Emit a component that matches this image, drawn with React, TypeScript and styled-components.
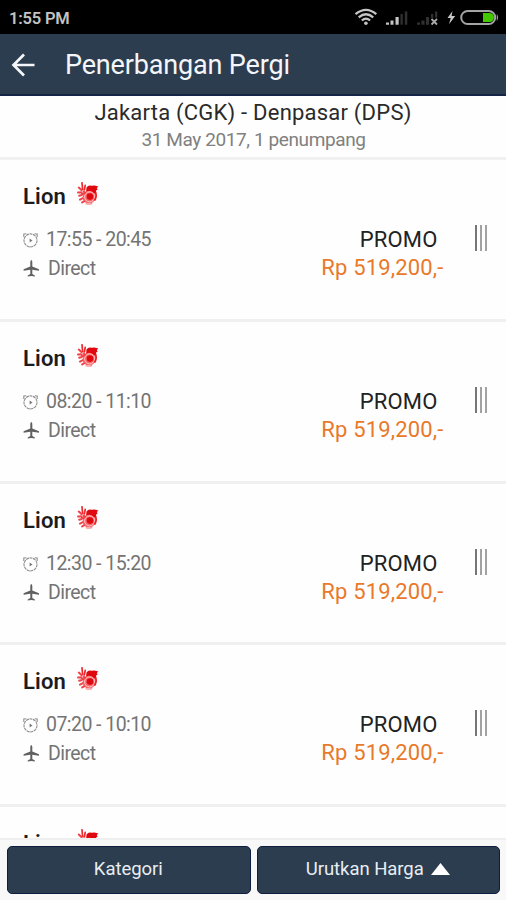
import React from "react";
import styled, { createGlobalStyle } from "styled-components";

const GlobalStyle = createGlobalStyle`
  * { box-sizing: border-box; }
  html, body { margin: 0; padding: 0; background: #fff; overflow: hidden; }
  body { font-family: Roboto, "Liberation Sans", sans-serif; }
`;

const Screen = styled.div`
  display: flex;
  flex-direction: column;
  width: 506px;
  height: 900px;
  overflow: hidden;
  background: #fefefe;
  white-space: nowrap;
`;

const StatusBar = styled.div`
  display: flex;
  flex: none;
  justify-content: space-between;
  height: 34px;
  padding-left: 9px;
  background: #000;
`;

const Clock = styled.span`
  font-size: 16.5px;
  line-height: 37px;
  font-weight: 600;
  color: #c4c4c4;
  letter-spacing: -0.2px;
`;

const Toolbar = styled.header`
  display: flex;
  flex: none;
  align-items: center;
  height: 62px;
  padding-left: 11px;
  background: #2c3d50;
  border-bottom: 2px solid #142548;
`;

const Title = styled.h1`
  margin: 2px 0 0 29px;
  font-size: 27px;
  line-height: 60px;
  font-weight: 400;
  color: #f4f6f9;
  letter-spacing: -0.16px;
`;

const RouteSummary = styled.section`
  flex: none;
  height: 64px;
  padding-top: 3px;
  border-bottom: 3px solid #f1f1f1;
  text-align: center;
`;

const Route = styled.div`
  font-size: 22px;
  line-height: 28px;
  color: #2a2a2a;
  letter-spacing: 0.22px;
`;

const TripInfo = styled.div`
  padding-left: 1px;
  font-size: 19px;
  line-height: 26px;
  color: #808080;
  letter-spacing: -0.4px;
`;

const FlightList = styled.main`
  flex: none;
  height: 678px;
  overflow: hidden;
`;

const FlightCard = styled.article`
  display: flex;
  justify-content: space-between;
  height: 161.75px;
  padding: 22px 19.5px 0 23px;
  border-bottom: 3px solid #f0f0f0;
`;

const Airline = styled.div`
  display: flex;
  height: 30px;
  gap: 11px;
`;

const AirlineName = styled.span`
  font-size: 22px;
  line-height: 30px;
  font-weight: 600;
  color: #1c1c1c;
  letter-spacing: 0.15px;
`;

const Details = styled.div`
  display: flex;
  flex-direction: column;
`;

const DetailRow = styled.div<{ $gap: number; $top: number }>`
  display: flex;
  align-items: center;
  gap: ${(p) => p.$gap}px;
  height: 28px;
  margin-top: ${(p) => p.$top}px;
`;

const DetailText = styled.span`
  font-size: 19.5px;
  line-height: 28px;
  color: #747474;
  letter-spacing: -0.55px;
`;

const Fare = styled.div`
  display: flex;
  gap: 31px;
  padding-top: 43px;
`;

const FareText = styled.div`
  display: flex;
  flex-direction: column;
  align-items: flex-end;
  padding-top: 1px;
`;

const Promo = styled.span`
  margin-right: 6px;
  font-size: 22px;
  line-height: 28px;
  color: #222;
  letter-spacing: 0.15px;
`;

const Price = styled.span`
  font-size: 22px;
  line-height: 28px;
  color: #e8792a;
  letter-spacing: 0.16px;
`;

const Handle = styled.div`
  display: flex;
  gap: 3px;
  height: 26px;
`;

const HandleBar = styled.i<{ $tone: string }>`
  width: 2px;
  background: ${(p) => p.$tone};
`;

const BottomBar = styled.footer`
  display: flex;
  flex: none;
  gap: 6px;
  height: 62px;
  padding: 6px 6px 6px 7px;
  background: #f8f8f8;
  border-top: 2px solid #efefef;
`;

const ActionButton = styled.button`
  display: flex;
  flex: 1;
  justify-content: center;
  align-items: center;
  gap: 7px;
  height: 48px;
  padding: 0 1px 2px 0;
  border: 1.5px solid #0e1d40;
  border-radius: 5px;
  background: #2c3d50;
  color: #e9edf2;
  font-family: inherit;
  font-size: 18.5px;
  line-height: 26px;
  letter-spacing: -0.05px;
`;

const StatusIcons = () => (
  <svg width="156" height="34" viewBox="0 0 156 34" fill="none">
    <g stroke="#c4c4c4" strokeWidth="2.3">
      <path d="M5.5 14.2Q16 5.6 26.3 14.2" />
      <path d="M8.7 17.4Q16 11.2 23.2 17.4" />
      <path d="M11.8 20.5Q16 16.8 20.1 20.5" />
    </g>
    <circle cx="15.9" cy="23.2" r="1.8" fill="#c4c4c4" />
    <path d="M36 22.5h3v2.3h-3zM40.5 20.5h3v4.3h-3zM45.5 17h3.2v7.8h-3.2z" fill="#c4c4c4" />
    <path d="M50.5 14h2.3v10.8h-2.3zM54.8 11.5h2.5v13.3h-2.5z" fill="#303030" />
    <path d="M67 22.5h3v2.3h-3zM71.5 20.5h3v4.3h-3zM76 17h3v7.8h-3zM81 14h2.3v4h-2.3zM85 11.5h2.3v6H85z" fill="#303030" />
    <path d="M81.5 19l5.5 5.5M87 19l-5.5 5.5" stroke="#aaa" strokeWidth="1.8" />
    <path d="M102.5 11l-5 7h3.2l-1.7 6.2 6.2-8.2h-3.6z" fill="#c8c8c8" />
    <rect x="111.2" y="11" width="34" height="13" rx="6.5" stroke="#a4a4a4" strokeWidth="2" />
    <path d="M146.8 14v7q2.6-3.5 0-7" fill="#a4a4a4" />
    <path d="M133 13h6.5a4.5 4.5 0 0 1 0 9H133z" fill="#43c800" />
  </svg>
);

const BackArrow = () => (
  <svg width="25" height="26" viewBox="0 0 25 26" fill="none" stroke="#f4f6f9" strokeWidth="2.7">
    <path d="M23.5 14H2.5M13 3.5L2.5 14 13 24.5" />
  </svg>
);

const LionLogo = () => (
  <svg width="22" height="24" viewBox="0 0 22 24">
    <path d="M9.5 5.4q2-2.6 5-1.6l3-.3 3.9.9-1.6 1.7.8 1.4-1.6 1.2.4 2.6-2 .4-8.4-1.2z" fill="#e0080f" />
    <circle cx="12" cy="15.2" r="6.4" fill="#f5686b" />
    <circle cx="12.6" cy="14.9" r="5" fill="none" stroke="#ffc4c4" strokeWidth="1" />
    <circle cx="13" cy="14.6" r="3.3" fill="#e0080f" />
    <path d="M18.6 10.6q1.4 4.6-1.2 8" fill="none" stroke="#ea2026" strokeWidth="1.8" />
    <path d="M5 .8l.6 6.8M8.2 3.4l-.8 4.4" stroke="#ee2a30" strokeWidth="1.7" strokeLinecap="round" />
    <path d="M1.8 5.6L4.4 8M1 10.4l3.2-.2M2.2 13.8l2.6-.8M6.6 9.6l1.6 1M5 11.4l1.6.6M3 17.6l2.4-1.2M5.2 20.4l1.8-1" stroke="#f04348" strokeWidth="2" strokeLinecap="round" />
    <path d="M8.6 21.6q3.6 1.4 6.6-.2" fill="none" stroke="#f79a9c" strokeWidth="1.2" />
  </svg>
);

const ClockIcon = () => (
  <svg width="15" height="16" viewBox="0 0 15 16" fill="none" stroke="#8f8f8f">
    <circle cx="7.5" cy="8.4" r="6.5" strokeWidth="1.1" strokeDasharray="3 .6" />
    <path d="M.8 5V2l2.5-.2M11.7 1.8l2.5.2v3" strokeWidth="1.1" />
    <path d="M6.6 6.4v4l2.9-2z" fill="#777" stroke="none" />
  </svg>
);

const PlaneIcon = () => (
  <svg width="17" height="18" viewBox="0 0 17 18" fill="#606060">
    <path d="M8.3 0q-1 .3-1 2v4.5L.6 9.3v1.4l6.7-.9v4.3l-2.6 1.4v1l3.6-.5 3.6.5v-1l-2.6-1.4V9.8l6.7.9V9.3L9.3 6.5V2q0-1.7-1-2z" />
  </svg>
);

const UpTriangle = () => (
  <svg width="19" height="12" viewBox="0 0 19 12" fill="#fff">
    <path d="M9.5 0L19 12H0z" />
  </svg>
);

const departures = ["17:55 - 20:45", "08:20 - 11:10", "12:30 - 15:20", "07:20 - 10:10"];

const Flight = ({ time }: { time?: string }) => (
  <FlightCard>
    <Details>
      <Airline>
        <AirlineName>Lion</AirlineName>
        <LionLogo />
      </Airline>
      {time && (
        <>
          <DetailRow $gap={8} $top={14}>
            <ClockIcon />
            <DetailText>{time}</DetailText>
          </DetailRow>
          <DetailRow $gap={8} $top={1}>
            <PlaneIcon />
            <DetailText>Direct</DetailText>
          </DetailRow>
        </>
      )}
    </Details>
    {time && (
      <Fare>
        <FareText>
          <Promo>PROMO</Promo>
          <Price>Rp 519,200,-</Price>
        </FareText>
        <Handle>
          <HandleBar $tone="#777" />
          <HandleBar $tone="#a2a2a2" />
          <HandleBar $tone="#a2a2a2" />
        </Handle>
      </Fare>
    )}
  </FlightCard>
);

export default function App() {
  return (
    <>
      <GlobalStyle />
      <Screen>
        <StatusBar>
          <Clock>1:55 PM</Clock>
          <StatusIcons />
        </StatusBar>
        <Toolbar>
          <BackArrow />
          <Title>Penerbangan Pergi</Title>
        </Toolbar>
        <RouteSummary>
          <Route>Jakarta (CGK) - Denpasar (DPS)</Route>
          <TripInfo>31 May 2017, 1 penumpang</TripInfo>
        </RouteSummary>
        <FlightList>
          {departures.map((time) => (
            <Flight key={time} time={time} />
          ))}
          <Flight />
        </FlightList>
        <BottomBar>
          <ActionButton>Kategori</ActionButton>
          <ActionButton>
            Urutkan Harga
            <UpTriangle />
          </ActionButton>
        </BottomBar>
      </Screen>
    </>
  );
}
